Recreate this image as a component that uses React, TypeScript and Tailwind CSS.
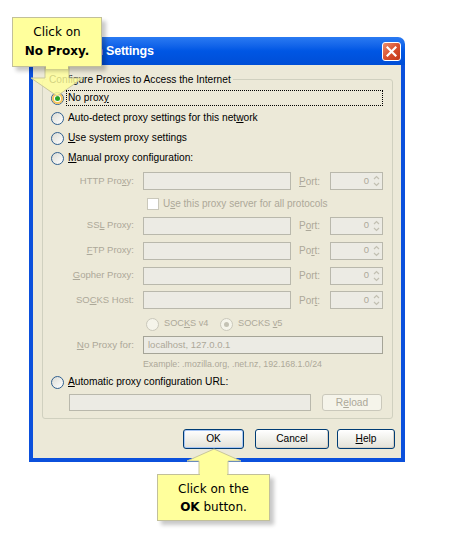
import React from "react";

const DIS = "text-[#aca899]";

function U({ children }: { children: React.ReactNode }) {
  return <span className="underline underline-offset-[1px]">{children}</span>;
}

function Radio({ checked = false, disabled = false }: { checked?: boolean; disabled?: boolean }) {
  if (disabled) {
    return (
      <span className="w-[13px] h-[13px] rounded-full border border-[#cac8bb] bg-[#f5f4ea] flex items-center justify-center shrink-0">
        {checked && <span className="w-[5px] h-[5px] rounded-full bg-[#c4c2b4]" />}
      </span>
    );
  }
  return (
    <span className="w-[13px] h-[13px] rounded-full border border-[#2f5f8f] bg-linear-to-br from-[#dcdcd4] to-white flex items-center justify-center shrink-0">
      {checked && (
        <span className="w-[11px] h-[11px] rounded-full border-2 border-[#f6c45c] bg-white flex items-center justify-center">
          <span className="w-[5px] h-[5px] rounded-full bg-[#25a325]" />
        </span>
      )}
    </span>
  );
}

function Field({ className = "", value = "" }: { className?: string; value?: string }) {
  return (
    <div className={`h-[18px] border border-[#b9b8ac] bg-[#ecebe4] flex items-center px-[4px] text-[#aca899] ${className}`}>
      {value}
    </div>
  );
}

function PortBox() {
  return (
    <div className="w-[53px] h-[18px] border border-[#b9b8ac] bg-[#ecebe4] flex items-center justify-end text-[#aca899] text-[9.5px]">
      <span className="mr-[3px]">0</span>
      <svg width="9" height="14" viewBox="0 0 9 14" className="mr-[1px]">
        <path d="M2 5 L4.5 2.5 L7 5" fill="none" stroke="#c2c0b2" strokeWidth="1.2" />
        <path d="M2 9 L4.5 11.5 L7 9" fill="none" stroke="#c2c0b2" strokeWidth="1.2" />
      </svg>
    </div>
  );
}

function ProxyRow({ label, port, h }: { label: React.ReactNode; port: React.ReactNode; h: string }) {
  return (
    <div className={`flex items-center ${h}`}>
      <div className={`w-[91px] text-right text-[9.5px] ${DIS}`}>{label}</div>
      <Field className="ml-[9px] w-[148px]" />
      <div className={`ml-[8px] w-[31px] text-[10px] ${DIS}`}>{port}</div>
      <PortBox />
    </div>
  );
}

function Btn({ children, w, def = false, disabled = false }: { children: React.ReactNode; w: string; def?: boolean; disabled?: boolean }) {
  if (disabled) {
    return (
      <div className={`${w} h-[17px] rounded-[3px] border border-[#cac8bb] bg-[#f5f4ea] flex items-center justify-center ${DIS}`}>
        {children}
      </div>
    );
  }
  return (
    <div
      className={`${w} h-[20px] rounded-[3px] border border-[#003c74] bg-linear-to-b from-white to-[#e3e2d8] flex items-center justify-center text-black ${
        def ? "shadow-[inset_0_0_0_1px_#a9c7f5]" : "shadow-[inset_-1px_-1px_0_#d6d0c5]"
      }`}
    >
      {children}
    </div>
  );
}

export default function App() {
  return (
    <div className="relative w-[454px] h-[545px] bg-white overflow-hidden pl-[29px] pt-[37px] font-['Liberation_Sans',Arial,sans-serif] text-[10.2px] text-black">
      {/* Dialog window */}
      <div className="w-[376px] flex flex-col">
        {/* Title bar */}
        <div className="h-[28px] rounded-t-[7px] bg-linear-to-b from-[#2a7af2] via-[#0056e4] to-[#004ed6] flex items-center pl-[7px] pr-[4px]">
          <span className="flex-1 text-white font-bold text-[12.5px] tracking-[-0.2px]">Connection Settings</span>
          <div className="w-[19px] h-[19px] rounded-[3px] border border-white bg-linear-to-br from-[#ec8d6e] via-[#d9512f] to-[#c2391a] flex items-center justify-center">
            <svg width="11" height="11" viewBox="0 0 11 11">
              <path d="M1.5 1.5 L9.5 9.5 M9.5 1.5 L1.5 9.5" stroke="white" strokeWidth="2.2" strokeLinecap="square" />
            </svg>
          </div>
        </div>
        {/* Body */}
        <div className="border-x-4 border-b-4 border-[#0b50dc] bg-[#ece9d8] flex flex-col">
          <fieldset className="mt-[8px] ml-[9px] mr-[8px] border border-[#d0d0bf] rounded-[3px] pb-[7px] min-w-0">
            <legend className="ml-[4px] px-[2px] leading-[13px]">Configure Proxies to Access the Internet</legend>
            <div className="mt-[2px] h-[20px] flex items-center pl-[8px]">
              <Radio checked />
              <div className="ml-[2px] mr-[9px] flex-1 h-[16px] border border-dotted border-black flex items-center pl-[1px]">
                No prox<U>y</U>
              </div>
            </div>
            <div className="h-[20px] flex items-center pl-[8px]">
              <Radio />
              <span className="ml-[4px]">
                Auto-detect proxy settings for this net<U>w</U>ork
              </span>
            </div>
            <div className="h-[20px] flex items-center pl-[8px]">
              <Radio />
              <span className="ml-[4px]">
                <U>U</U>se system proxy settings
              </span>
            </div>
            <div className="h-[20px] flex items-center pl-[8px]">
              <Radio />
              <span className="ml-[4px]">
                <U>M</U>anual proxy configuration:
              </span>
            </div>
            <ProxyRow
              h="h-[26px]"
              label={<>HTTP Pro<U>x</U>y:</>}
              port={<><U>P</U>ort:</>}
            />
            <div className={`h-[19px] flex items-center pl-[104px] text-[10px] ${DIS}`}>
              <span className="w-[12px] h-[12px] border border-[#cac8bb] bg-white shrink-0" />
              <span className="ml-[4px]">
                U<U>s</U>e this proxy server for all protocols
              </span>
            </div>
            <ProxyRow h="h-[25px]" label={<>SS<U>L</U> Proxy:</>} port={<>P<U>o</U>rt:</>} />
            <ProxyRow h="h-[25px]" label={<><U>F</U>TP Proxy:</>} port={<>Po<U>r</U>t:</>} />
            <ProxyRow h="h-[25px]" label={<><U>G</U>opher Proxy:</>} port={<>Port:</>} />
            <ProxyRow h="h-[24px]" label={<>SO<U>C</U>KS Host:</>} port={<>Por<U>t</U>:</>} />
            <div className={`h-[24px] flex items-center pl-[103px] text-[9.2px] ${DIS}`}>
              <Radio disabled />
              <span className="ml-[5px] w-[56px]">
                SOC<U>K</U>S v4
              </span>
              <Radio disabled checked />
              <span className="ml-[5px]">
                SOCKS <U>v</U>5
              </span>
            </div>
            <div className="h-[18px] flex items-center">
              <div className={`w-[91px] text-right text-[9.8px] ${DIS}`}>
                <U>N</U>o Proxy for:
              </div>
              <div className="ml-[9px] w-[240px] h-[18px] border border-[#a5a497] bg-[#ecebe4] flex items-center px-[4px] text-[#aca899] text-[9.5px]">
                localhost, 127.0.0.1
              </div>
            </div>
            <div className={`mt-[2px] h-[18px] flex items-center pl-[100px] text-[8.8px] ${DIS}`}>
              Example: .mozilla.org, .net.nz, 192.168.1.0/24
            </div>
            <div className="h-[16px] flex items-center pl-[8px]">
              <Radio />
              <span className="ml-[4px]">
                <U>A</U>utomatic proxy configuration URL:
              </span>
            </div>
            <div className="mt-[4px] h-[17px] flex items-center pl-[26px]">
              <div className="w-[242px] h-[17px] border border-[#b9b8ac] bg-[#ecebe4]" />
              <div className="ml-[11px]">
                <Btn w="w-[60px]" disabled>
                  R<U>e</U>load
                </Btn>
              </div>
            </div>
          </fieldset>
          <div className="mt-[10px] mb-[9px] h-[20px] flex items-center pl-[150px]">
            <Btn w="w-[61px]" def>
              OK
            </Btn>
            <div className="ml-[11px]">
              <Btn w="w-[74px]">Cancel</Btn>
            </div>
            <div className="ml-[8px]">
              <Btn w="w-[58px]">
                <U>H</U>elp
              </Btn>
            </div>
          </div>
        </div>
      </div>

      {/* Callout arrows (overlay) */}
      <svg className="absolute left-0 top-0 pointer-events-none" width="454" height="545" viewBox="0 0 454 545">
        <polygon points="45,66 45,78 31,78 57,96 83,78 69,78 69,66" fill="#ffff9c" fillOpacity="0.82" />
        <polyline points="45,67 45,78 31,78 57,96 83,78 69,78 69,67" fill="none" stroke="#c9c79a" strokeWidth="1" />
        <polygon points="199,476 199,461 187,461 214,449 241,461 228,461 228,476" fill="#ffff9c" />
        <polyline points="199,475 199,461 187,461 214,449 241,461 228,461 228,475" fill="none" stroke="#c9c79a" strokeWidth="1" />
      </svg>

      {/* Top callout box */}
      <div className="absolute left-[12px] top-[17px] w-[90px] h-[50px] bg-[#ffff9c] border border-[#c2c09a] shadow-[4px_4px_4px_rgba(0,0,0,0.22)] flex flex-col items-center justify-center font-['DejaVu_Sans',Verdana,sans-serif] text-[12px] leading-[19px] text-black">
        <span>Click on</span>
        <span className="font-bold">No Proxy.</span>
      </div>
      {/* Bottom callout box */}
      <div className="absolute left-[157px] top-[474px] w-[113px] h-[47px] bg-[#ffff9c] border border-[#c2c09a] shadow-[4px_4px_4px_rgba(0,0,0,0.22)] flex flex-col items-center justify-center font-['DejaVu_Sans',Verdana,sans-serif] text-[12px] leading-[18px] text-black">
        <span>Click on the</span>
        <span>
          <span className="font-bold">OK</span> button.
        </span>
      </div>
      {/* cover seams of arrows over boxes */}
      <svg className="absolute left-0 top-0 pointer-events-none" width="454" height="545" viewBox="0 0 454 545">
        <rect x="46" y="64" width="22" height="5" fill="#ffff9c" />
        <rect x="200" y="472" width="27" height="5" fill="#ffff9c" />
      </svg>
    </div>
  );
}
